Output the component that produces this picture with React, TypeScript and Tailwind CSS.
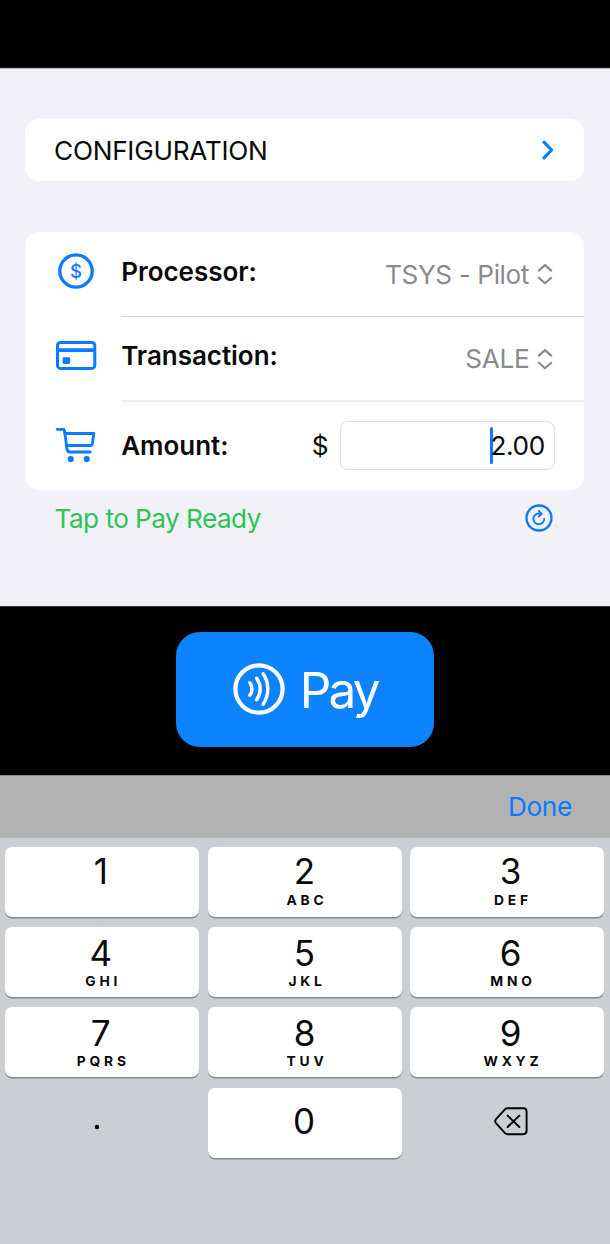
import type { ReactNode } from "react";

const BLUE = "#0a7aff";

function ChevronRight() {
  return (
    <svg width="14" height="22" viewBox="0 0 14 22" fill="none" stroke={BLUE} strokeWidth="3.2" strokeLinecap="round" strokeLinejoin="round">
      <path d="M3 3.2 L10.6 11 L3 18.8" />
    </svg>
  );
}

function DollarCircle() {
  return (
    <svg width="44" height="44" viewBox="0 0 44 44" fill="none" stroke={BLUE}>
      <circle cx="22" cy="22" r="16.2" strokeWidth="3.3" />
      <text x="22" y="28.8" textAnchor="middle" fill={BLUE} stroke="none" className="text-[18.5px] font-medium">
        $
      </text>
    </svg>
  );
}

function CardIcon() {
  return (
    <svg width="44" height="44" viewBox="0 0 44 44" fill="none" stroke={BLUE} strokeWidth="3">
      <rect x="3.5" y="9.4" width="37.3" height="26" rx="3" />
      <path d="M3.5 17.2 H40.5" strokeWidth="3.8" />
      <rect x="8.6" y="24.2" width="7.6" height="6.8" rx="1.4" fill={BLUE} stroke="none" />
    </svg>
  );
}

function CartIcon() {
  return (
    <svg width="44" height="44" viewBox="0 0 44 44" fill="none" stroke={BLUE} strokeWidth="2.8" strokeLinecap="round" strokeLinejoin="round">
      <path d="M3.1 6.3 H9.2 Q10.2 6.3 10.4 7.3 L13 26 Q13.4 29 15.8 29 H36.2" />
      <path d="M11 10.5 H39.9 L38.4 20.4 Q38 22.5 36 22.5 H12.6" />
      <circle cx="16.8" cy="36.1" r="3.1" fill={BLUE} stroke="none" />
      <circle cx="32.8" cy="36.1" r="3.1" fill={BLUE} stroke="none" />
    </svg>
  );
}

function Stepper() {
  return (
    <svg width="16" height="22" viewBox="0 0 16 22" fill="none" stroke="#8a8a8e" strokeWidth="2.2" strokeLinecap="round" strokeLinejoin="round">
      <path d="M1.8 7.6 L8 2.1 L14.2 7.6 M1.8 14.8 L8 20.3 L14.2 14.8" />
    </svg>
  );
}

function RefreshCircle() {
  return (
    <svg width="28" height="28" viewBox="0 0 28 28" fill="none" stroke={BLUE} strokeWidth="2.3" strokeLinecap="round" strokeLinejoin="round">
      <circle cx="14" cy="14" r="12.5" />
      <path d="M19.2 15 A5.4 5.4 0 1 1 13.8 9.5 L16.4 9.7" strokeWidth="1.9" />
      <path d="M13.8 6.9 L16.6 9.8 L13.8 12.6" strokeWidth="1.9" />
    </svg>
  );
}

function TapIcon() {
  return (
    <svg width="52" height="52" viewBox="-26 -26 52 52" fill="none" stroke="#fff" strokeLinecap="round">
      <circle cx="0" cy="0" r="23.6" strokeWidth="4.2" />
      <path strokeWidth="3.4" d="M-9.2 -6.3 A10 10 0 0 1 -9.2 6.3 M-2.3 -10.8 A18.5 18.5 0 0 1 -2.3 10.8 M4.1 -15.2 A27 27 0 0 1 4.1 15.2" />
    </svg>
  );
}

function DeleteIcon() {
  return (
    <svg width="34" height="30" viewBox="0 0 34 30" fill="none" stroke="#000" strokeWidth="1.9" strokeLinecap="round" strokeLinejoin="round">
      <path d="M13.4 2.2 H29.2 Q32.6 2.2 32.6 5.6 V24.8 Q32.6 28.2 29.2 28.2 H13.4 Q12.2 28.2 11.2 27.3 L2 17.2 Q0.4 15.2 2 13.2 L11.2 3.1 Q12.2 2.2 13.4 2.2 Z" />
      <path d="M13.6 9.6 L25.4 21 M25.4 9.6 L13.6 21" />
    </svg>
  );
}

const KEYS = [
  ["1", ""], ["2", "ABC"], ["3", "DEF"],
  ["4", "GHI"], ["5", "JKL"], ["6", "MNO"],
  ["7", "PQRS"], ["8", "TUV"], ["9", "WXYZ"],
];
const COLUMN_SHIFT = ["pr-[2.5px]", "pr-0", "pl-[7px]"];
const ROW_SHIFT = ["pt-[7px]", "pt-[8.5px]", "pt-[8.8px]"];
const LETTER_SHIFT = ["mt-[3px]", "mt-[2px]", "mt-[2px]"];

function Key({ className = "", children }: { className?: string; children: ReactNode }) {
  return (
    <button className={`flex h-[70px] flex-col items-center rounded-[7px] bg-white shadow-[0_1.5px_0_#85878b] ${className}`}>
      {children}
    </button>
  );
}

function Row({ icon, label, className, children }: { icon: ReactNode; label: string; className: string; children: ReactNode }) {
  return (
    <div className={`flex pl-[29px] ${className}`}>
      <div className="w-[67.2px] shrink-0">{icon}</div>
      <div className="text-[26px] leading-[46px] font-semibold tracking-[-0.03px]">{label}</div>
      {children}
    </div>
  );
}

export default function App() {
  return (
    <div className="flex h-[1244px] w-[610px] flex-col overflow-hidden bg-black font-[Inter,sans-serif] text-[26.2px] text-[#0a0a0a]">
      <div className="h-[68px] shrink-0 border-b border-[#1c1c1c] bg-black" />

      <main className="flex h-[538px] shrink-0 flex-col border-t border-[#b4b4b7] bg-[#f2f1f7] pr-[26px] pl-[25px] pt-[50px]">
        <button className="flex h-[62px] items-center justify-between rounded-[14px] bg-white pr-[29px] pl-[29px]">
          <span className="pt-[1.5px] tracking-[-0.25px]">CONFIGURATION</span>
          <ChevronRight />
        </button>

        <section className="mt-[51.3px] h-[257.5px] rounded-[14px] bg-white">
          <Row icon={<DollarCircle />} label="Processor:" className="h-[83.7px] pt-[17px]">
            <div className="mt-[3px] mr-[31px] ml-auto flex h-[44px] items-center gap-[8px] tracking-[-0.4px] text-[#8a8a8e]">
              <span className="pt-px">TSYS - Pilot</span>
              <Stepper />
            </div>
          </Row>
          <div className="ml-[95.5px] h-px bg-[#d3d3d6]" />
          <Row icon={<CardIcon />} label="Transaction:" className="h-[83px] pt-[16.3px]">
            <div className="mt-[3.5px] mr-[31px] ml-auto flex h-[44px] items-center gap-[7.5px] tracking-[-0.3px] text-[#8a8a8e]">
              <span>SALE</span>
              <Stepper />
            </div>
          </Row>
          <div className="ml-[95.5px] h-[2px] bg-[#ededef]" />
          <Row icon={<CartIcon />} label="Amount:" className="pt-[21.4px]">
            <span className="mr-[11.5px] ml-auto leading-[46px]">$</span>
            <div className="-mt-[2.7px] mr-[29px] flex h-[49px] w-[215px] items-center justify-end rounded-[8px] border border-[#dedee0] pr-[9.2px]">
              <span className="-mr-[2px] h-[37px] w-[3px] rounded-full bg-[#2074f6]" />
              <span className="pt-px tracking-[-0.4px]">2.00</span>
            </div>
          </Row>
        </section>

        <div className="mt-[10px] flex h-[36px] items-center justify-between pr-[30.7px] pl-[29.5px]">
          <span className="pt-px tracking-[-0.55px] text-[#2ac552]">Tap to Pay Ready</span>
          <RefreshCircle />
        </div>
      </main>

      <div className="flex h-[169px] shrink-0 justify-center border-t border-[#36383a] bg-black pt-[25px]">
        <button className="flex h-[114.5px] w-[257.5px] items-center rounded-[24px] bg-[#0c84ff] pl-[57px] text-white">
          <TapIcon />
          <span className="ml-[14.5px] pt-[1.5px] text-[49.5px] leading-[60px] tracking-[-2.8px]">Pay</span>
        </button>
      </div>

      <div className="flex h-[63px] shrink-0 items-center justify-end border-t border-[#8e8e8e] bg-[#b2b2b2] pr-[38.2px] tracking-[-0.4px] text-[#0a7aff]">
        Done
      </div>

      <div className="grid flex-1 grid-cols-3 content-start gap-x-[8.5px] gap-y-[10.2px] bg-[#cbced3] pt-[9px] pr-[6px] pl-[5px]">
        {KEYS.map(([digit, letters], i) => (
          <Key key={digit} className={`${COLUMN_SHIFT[i % 3]} ${ROW_SHIFT[Math.floor(i / 3)]}`}>
            <span className="text-[35px] leading-[35px]">{digit}</span>
            <span className={`pl-[5px] text-[13.8px] leading-[16px] font-bold tracking-[3.8px] ${LETTER_SHIFT[Math.floor(i / 3)]}`}>{letters}</span>
          </Key>
        ))}
        <button className="flex h-[70px] items-center justify-center pt-[9px] pr-[11px]">
          <svg width="6" height="6" viewBox="0 0 6 6">
            <circle cx="3" cy="3" r="2.2" />
          </svg>
        </button>
        <Key className="justify-center pr-px pb-[2.5px]">
          <span className="text-[35px] leading-[35px]">0</span>
        </Key>
        <button className="flex h-[70px] items-center justify-center pb-[3px] pl-[8px]">
          <DeleteIcon />
        </button>
      </div>
    </div>
  );
}
